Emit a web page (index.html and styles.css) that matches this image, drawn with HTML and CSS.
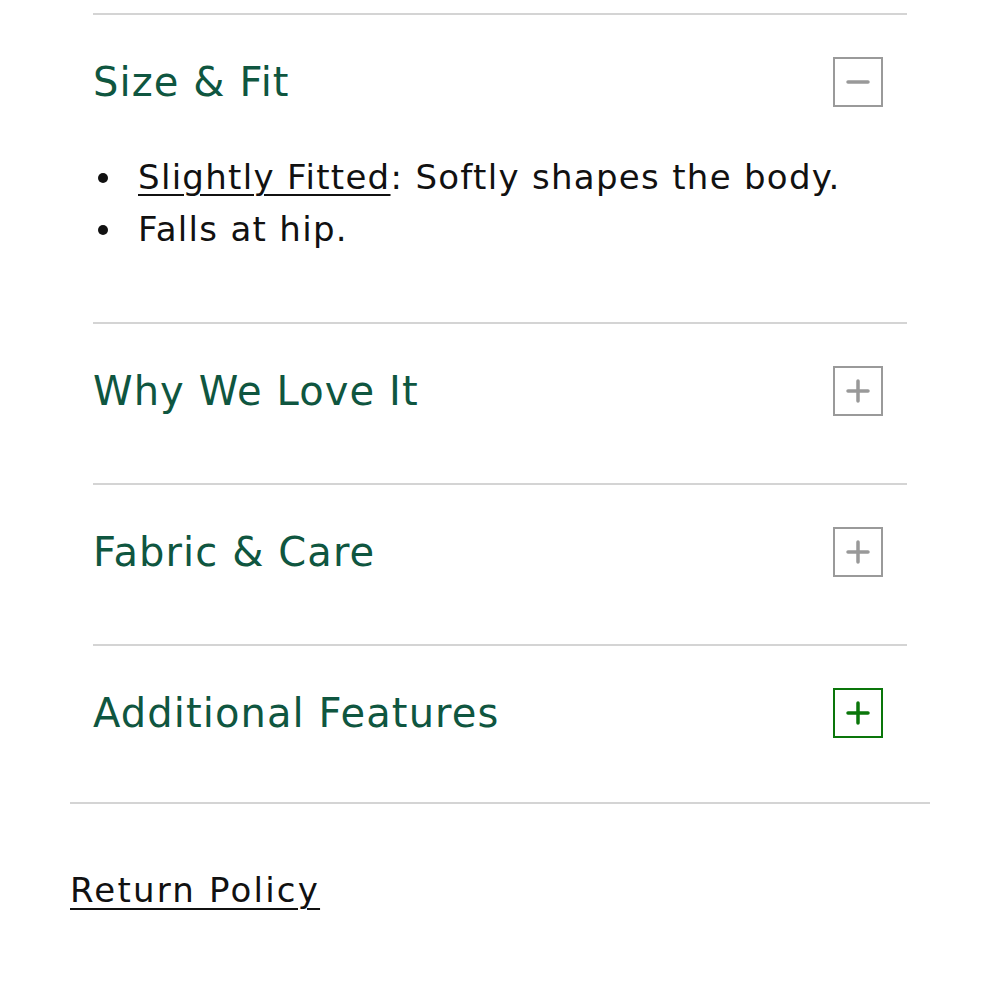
FILE: index.html
```html
<!DOCTYPE html>
<html>
<head>
<meta charset="utf-8">
<link rel="stylesheet" href="styles.css">
</head>
<body>
<div class="page">
  <div class="accordion">
    <div class="item">
      <div class="head">
        <h2 class="title">Size &amp; Fit</h2>
        <span class="toggle">
          <svg viewBox="0 0 50 50" width="50" height="50"><line x1="15" y1="25" x2="35" y2="25" stroke="#999" stroke-width="3.5" stroke-linecap="round"/></svg>
        </span>
      </div>
      <ul class="content">
        <li><a class="link" href="#">Slightly Fitted</a>: Softly shapes the body.</li>
        <li>Falls at hip.</li>
      </ul>
    </div>
    <div class="item">
      <div class="head">
        <h2 class="title">Why We Love It</h2>
        <span class="toggle">
          <svg viewBox="0 0 50 50" width="50" height="50"><path d="M15 25H35M25 15V35" stroke="#999" stroke-width="3.5" stroke-linecap="round"/></svg>
        </span>
      </div>
    </div>
    <div class="item">
      <div class="head">
        <h2 class="title">Fabric &amp; Care</h2>
        <span class="toggle">
          <svg viewBox="0 0 50 50" width="50" height="50"><path d="M15 25H35M25 15V35" stroke="#999" stroke-width="3.5" stroke-linecap="round"/></svg>
        </span>
      </div>
    </div>
    <div class="item">
      <div class="head">
        <h2 class="title">Additional Features</h2>
        <span class="toggle active">
          <svg viewBox="0 0 50 50" width="50" height="50"><path d="M15 25H35M25 15V35" stroke="#0a760a" stroke-width="3.5" stroke-linecap="round"/></svg>
        </span>
      </div>
    </div>
  </div>
  <a class="return" href="#">Return Policy</a>
</div>
</body>
</html>
```

FILE: styles.css
```css
html, body {
  margin: 0;
  padding: 0;
  background: #fff;
}
.page {
  padding: 0 70px;
  font-family: "DejaVu Sans", sans-serif;
}
.accordion {
  border-bottom: 2px solid #d4d4d4;
  padding-top: 13px;
}
.item {
  margin: 0 23px;
  border-top: 2px solid #d4d4d4;
  padding: 42px 0 67px;
}
.item:last-child {
  padding-bottom: 64px;
}
.head {
  display: flex;
  align-items: center;
  justify-content: space-between;
  height: 50px;
}
.title {
  margin: 0;
  font-weight: 500;
  font-size: 40px;
  color: #0f5640;
  letter-spacing: 1.1px;
}
.toggle {
  box-sizing: border-box;
  width: 50px;
  height: 50px;
  border: 2px solid #9a9a9a;
  margin-right: 24px;
  display: block;
}
.toggle svg {
  display: block;
  margin: -2px;
}
.toggle.active {
  border-color: #0a760a;
}
.content {
  margin: 44px 0 0;
  padding-left: 45px;
  list-style: none;
  font-size: 34px;
  line-height: 52px;
  letter-spacing: 1.3px;
  color: #111;
}
.content li {
  position: relative;
}
.content li::before {
  content: "";
  position: absolute;
  left: -40px;
  top: 22px;
  width: 10px;
  height: 10px;
  border-radius: 50%;
  background: #111;
}
.link {
  color: #111;
  text-decoration: underline;
  text-underline-offset: 5px;
  text-decoration-thickness: 2px;
}
.return {
  display: inline-block;
  margin-top: 66px;
  font-size: 34px;
  letter-spacing: 2.2px;
  color: #111;
  text-decoration: underline;
  text-underline-offset: 6px;
  text-decoration-thickness: 2px;
}
```
